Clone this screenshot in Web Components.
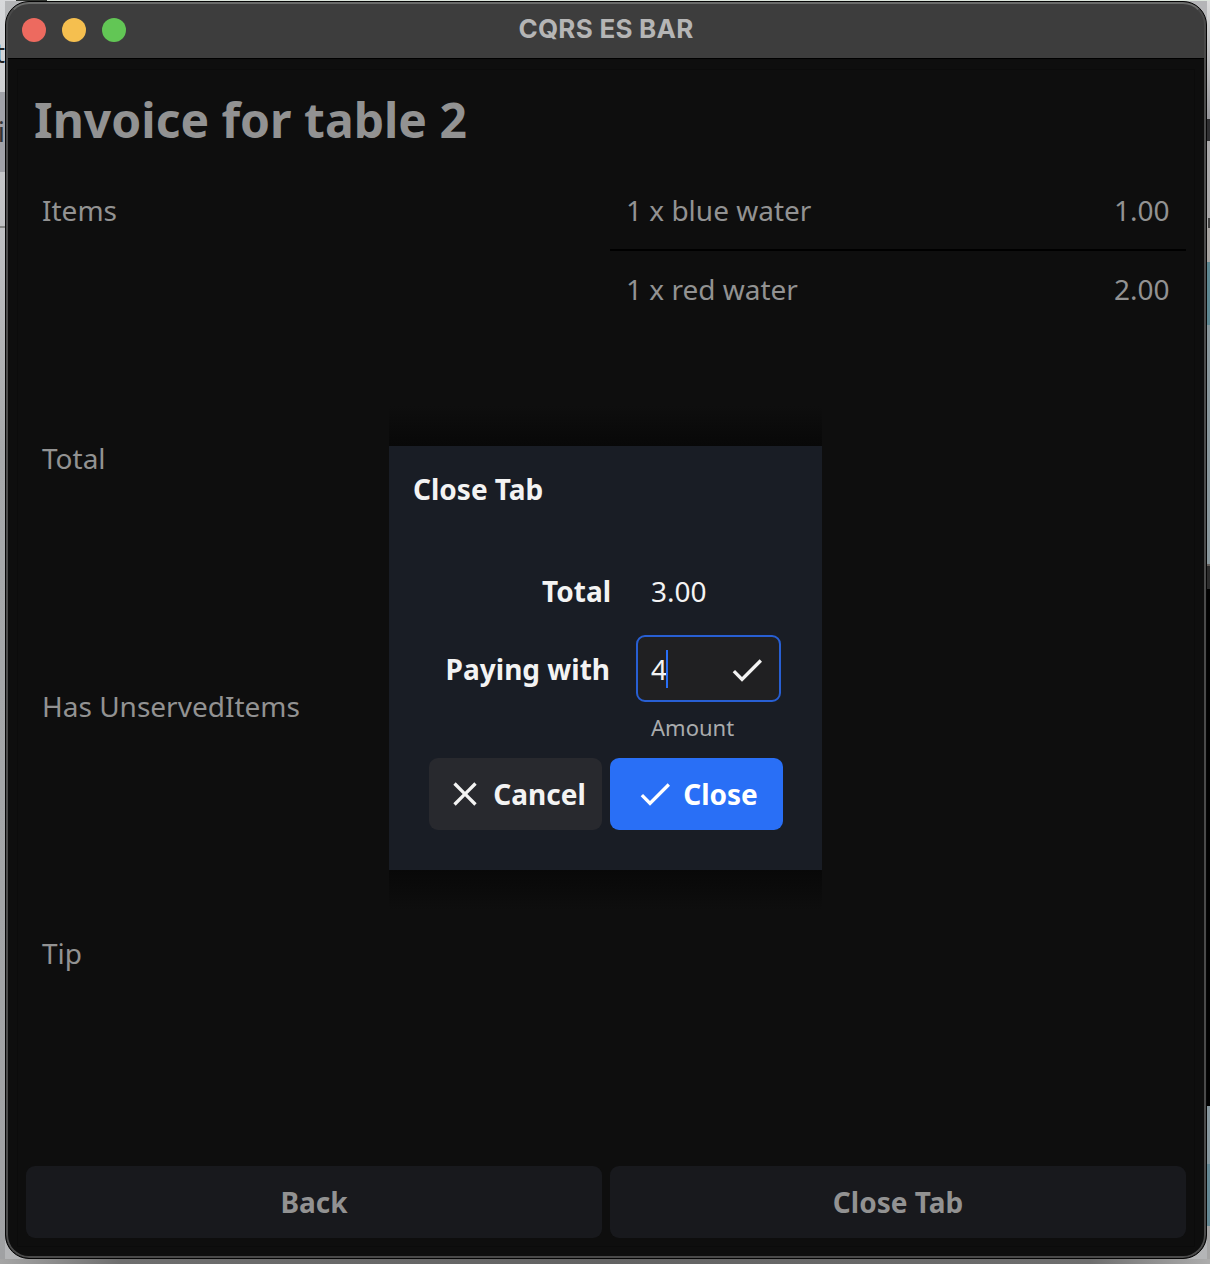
<!DOCTYPE html>
<html lang="en"><head><meta charset="utf-8"><title>CQRS ES BAR</title>
<style>html,body{margin:0;height:1264px;overflow:hidden}body{font-family:"Noto Sans",sans-serif;font-size:28px;line-height:36px;color:#929292}</style>
</head><body>
<desk-top>
<app-window heading="CQRS ES BAR">
 <invoice-view></invoice-view>
 <close-dialog slot="overlay"></close-dialog>
</app-window>
</desk-top>
<script>
const define=(name,html)=>{
  const t=document.createElement('template');
  t.innerHTML='<style>*,:host{box-sizing:border-box}</style>'+html;
  customElements.define(name,class extends HTMLElement{
    constructor(){
      super();
      this.attachShadow({mode:'open'}).append(t.content.cloneNode(true));
    }
    connectedCallback(){
      this.shadowRoot.querySelectorAll('[data-attr]').forEach(e=>e.textContent=this.getAttribute(e.dataset.attr)||'');
    }
  });
};
define('desk-top',`<style>
:host{display:grid;grid-template-columns:5px 1202px 3px;grid-template-rows:1px 1258px 5px;width:1210px;height:1264px;background:#b4b5b7;overflow:hidden}
.top{grid-column:1/4;background:linear-gradient(90deg,#d8d9db 16px,#30332f 16px 47px,#dce5dc 47px)}
.left,.right{display:flex;flex-direction:column;overflow:hidden}
.left{background:linear-gradient(#d8d9db,#a7a9ab 450px,#a3a5a7 900px,#a0a1a3)}
.left span{display:block;line-height:30px;color:#222;font-size:28px;direction:rtl;width:5px;white-space:nowrap}
.left .a{padding-top:36px;height:91px}
.left .b{padding-top:24px;height:80px;background:#a1a2a8;color:#333}
.left .line{height:2px;background:#858684;margin-top:54px}
.right i{display:block;flex:none}
.bottom{grid-column:1/4;background:linear-gradient(90deg,#a5a5a5,#6e6e6e 120px,#636363 50%,#6e6e6e 1090px,#adadad)}
</style><div class="top"></div>
<div class="left"><span class="a">t</span><span class="b">i</span><div class="line"></div></div>
<slot></slot>
<div class="right">
<i style="height:118px;background:linear-gradient(#dcdddd,#98989c)"></i><i style="height:22px;background:#303032"></i>
<i style="height:77px;background:#aaa9aa"></i><i style="height:10px;background:linear-gradient(90deg,#aaa 1px,#444 1px)"></i>
<i style="height:34px;background:#a8a5a2"></i><i style="height:63px;background:#5d8791"></i>
<i style="height:239px;background:#89979c"></i><i style="height:2px;background:#66605c"></i><i style="height:23px;background:#2c2c2c"></i>
<i style="height:517px;background:#010101"></i><i style="height:58px;background:#87979e"></i><i style="height:62px;background:#648894"></i><i style="height:33px;background:#a5a5a5"></i>
</div><div class="bottom"></div>`);
define('app-window',`<style>
:host{display:flex;flex-direction:column;position:relative;height:1258px;border:1px solid #050505;border-radius:24px;overflow:hidden;background:#0e0e0e}
:host::after{content:"";position:absolute;inset:0;border:2px solid #4a4a4a;border-top-color:#6a6b6a;border-radius:23px;pointer-events:none}
header{display:grid;grid-template-columns:1fr auto 1fr;align-items:center;height:57px;flex:none;padding:0 16px;background:#3d3d3d;border-bottom:1px solid #000}
.dots{display:flex;gap:16px}.dots i{width:24px;height:24px;border-radius:50%}
b{font:700 26px/30px Inter,sans-serif;color:#b5b5b5;letter-spacing:.25px;padding-bottom:2px}
main{flex:1;display:flex;padding:10px 11px 11px}
</style><header><div class="dots"><i style="background:#ed6a5f"></i><i style="background:#f5bf4f"></i><i style="background:#62c655"></i></div><b data-attr="heading"></b></header>
<main><slot></slot></main><slot name="overlay"></slot>`);
define('item-row',`<style>:host{display:flex;justify-content:space-between;padding:16px 16.5px 16px 16px;height:70px}</style><span data-attr="name"></span><span data-attr="price"></span>`);
define('plain-button',`<style>:host{display:flex;flex:1;align-items:center;justify-content:center;gap:8px;height:72px;border-radius:9px;background:#18191d;font-weight:700}</style><slot></slot>`);
define('ui-icon',`<style>:host{display:block;width:40px;height:40px;flex:none}svg{display:block;width:40px;height:40px;fill:currentColor}.x{display:none}:host([kind=x]) .x{display:block}:host([kind=x]) .c{display:none}</style>
<svg viewBox="0 0 24 24"><path class="c" d="M9 16.17 4.83 12l-1.42 1.41L9 19 21 7l-1.41-1.41z"/><path class="x" d="M19 6.41 17.59 5 12 10.59 6.41 5 5 6.41 10.59 12 5 17.59 6.41 19 12 13.41 17.59 19 19 17.59 13.41 12z"/></svg>`);
define('invoice-view',`<style>
:host{flex:1;display:flex;flex-direction:column;border:1px solid #0b0b0b;padding:8px}
h1{margin:0;font-size:48px;line-height:66px;padding:9px 8px 0;height:98px;flex:none}
.grid{flex:1;display:grid;grid-template-columns:1fr 1fr;grid-template-rows:240px 240px 239px 239px;gap:8px}
.grid>span{padding:16px}
hr{border:0;height:2px;background:#000;margin:3px 0 4px}
.bar{display:flex;gap:8px}
</style><h1>Invoice for table 2</h1>
<div class="grid"><span>Items</span><div><item-row name="1 x blue water" price="1.00"></item-row><hr><item-row name="1 x red water" price="2.00"></item-row></div>
<span>Total</span><i></i><span>Has UnservedItems</span><i></i><span>Tip</span><i></i></div>
<div class="bar"><plain-button>Back</plain-button><plain-button>Close Tab</plain-button></div>`);
define('close-dialog',`<style>
:host{display:block;position:absolute;left:383px;top:404px;width:433px;color:#f3f3f3}
.shade{height:40px;background:linear-gradient(#0e0e0e,#080808)}.shade.low{background:linear-gradient(#080808,#0e0e0e)}
.box{height:424px;background:#191d25;padding:24px 39px 40px 40px;display:flex;flex-direction:column}
h2{margin:0 0 0 -16px;font-size:28px;line-height:38px}
.form{display:grid;grid-template-columns:181px 145px;column-gap:26px;margin-top:65px;grid-template-rows:62px 67px 56px}
.form b{text-align:right}.form .t{margin-right:-1px}.form .v{padding-left:15px}
.form b.p{padding-top:16px}
.input{display:flex;align-items:center;border:2px solid #285fd3;border-radius:9px;background:#202022;padding:0 12px 0 13px}
.input u{width:2px;height:38px;background:#296ff6;margin-right:auto;margin-left:-1px}
.input ui-icon{position:relative;top:1px}
.hint{grid-column:2;font-size:22px;line-height:30px;padding:10px 0 0 15px;color:#a9abad}
.btns{display:flex;gap:8px}
.cancel{background:#28292e}.ok{background:#296ff6;color:#fff}
</style><div class="shade"></div><div class="box"><h2>Close Tab</h2>
<div class="form"><b class="t">Total</b><span class="v">3.00</span><b class="p">Paying with</b><div class="input"><span>4</span><u></u><ui-icon></ui-icon></div><span class="hint">Amount</span></div>
<div class="btns"><plain-button class="cancel"><ui-icon kind="x"></ui-icon><span>Cancel</span></plain-button><plain-button class="ok"><ui-icon></ui-icon><span>Close</span></plain-button></div></div><div class="shade low"></div>`);
</script></body></html>
